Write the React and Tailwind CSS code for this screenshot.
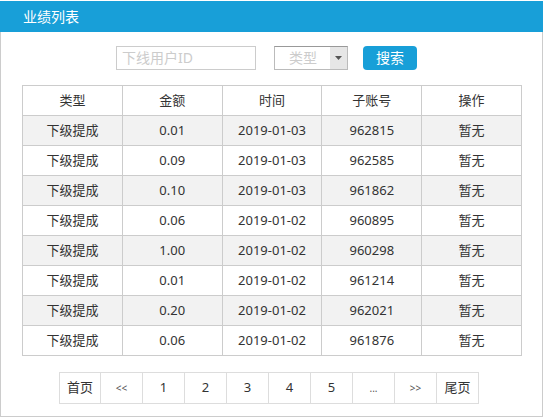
import React from "react";

const rows = [
  ["下级提成", "0.01", "2019-01-03", "962815", "暂无"],
  ["下级提成", "0.09", "2019-01-03", "962585", "暂无"],
  ["下级提成", "0.10", "2019-01-03", "961862", "暂无"],
  ["下级提成", "0.06", "2019-01-02", "960895", "暂无"],
  ["下级提成", "1.00", "2019-01-02", "960298", "暂无"],
  ["下级提成", "0.01", "2019-01-02", "961214", "暂无"],
  ["下级提成", "0.20", "2019-01-02", "962021", "暂无"],
  ["下级提成", "0.06", "2019-01-02", "961876", "暂无"],
];

const pages = ["首页", "<<", "1", "2", "3", "4", "5", "...", ">>", "尾页"];

const App = () => {
  return (
    <div className="w-[544px] h-[418px] bg-white pt-px font-['Noto_Sans','Noto_Sans_CJK_SC',sans-serif] text-[#333]">
      <div className="w-[543px] h-[416px] border-x border-b border-[#ccc]">
        {/* HEADER */}
        <div className="h-[31px] -mx-px bg-[#189fd8] text-white text-[14px] leading-[31px] pl-[23px]">
          业绩列表
        </div>

        {/* SEARCH */}
        <div className="flex items-center mt-[14px] h-[24px] pl-[115px]">
          <div className="w-[140px] h-[24px] border border-[#ccc] text-[#ccc] text-[14px] leading-[22px] pl-[5px]">
            下线用户ID
          </div>
          <div className="ml-[18px] w-[74px] h-[24px] border border-[#bbb] border-t-[#999] flex">
            <div className="flex-1 text-[#ccc] text-[14px] leading-[22px] pl-[14px]">类型</div>
            <div className="w-[17px] bg-[#e6e6e6] flex items-center justify-center">
              <svg width="7" height="4" viewBox="0 0 7 4">
                <path d="M0 0h7L3.5 4z" fill="#555" />
              </svg>
            </div>
          </div>
          <div className="ml-[15px] w-[54px] h-[24px] rounded-[4px] bg-[#189fd8] text-white text-[14px] leading-[24px] text-center">
            搜索
          </div>
        </div>

        {/* TABLE */}
        <table className="ml-[21px] mt-[15px] w-[500px] border-collapse text-[13px] table-fixed">
          <thead>
            <tr className="h-[30px]">
              {["类型", "金额", "时间", "子账号", "操作"].map((h) => (
                <th key={h} className="border border-[#ccc] font-normal text-center p-0">
                  {h}
                </th>
              ))}
            </tr>
          </thead>
          <tbody>
            {rows.map((r, i) => (
              <tr key={i} className={i % 2 === 0 ? "h-[30px] bg-[#f2f2f2]" : "h-[30px] bg-white"}>
                {r.map((c, j) => (
                  <td key={j} className="border border-[#ccc] text-center p-0">
                    {c}
                  </td>
                ))}
              </tr>
            ))}
          </tbody>
        </table>

        {/* PAGINATION */}
        <div className="flex ml-[58px] mt-[16px]">
          {pages.map((p, i) => (
            <div
              key={p}
              className={
                "w-[42px] h-[32px] border-y border-r border-[#ddd] flex items-center justify-center " +
                (i === 0 ? "border-l " : "") +
                (p === "<<" || p === ">>" || p === "..." ? "text-[10px] text-[#555]" : "text-[13px]")
              }
            >
              {p}
            </div>
          ))}
        </div>
      </div>
    </div>
  );
};

export default App;
